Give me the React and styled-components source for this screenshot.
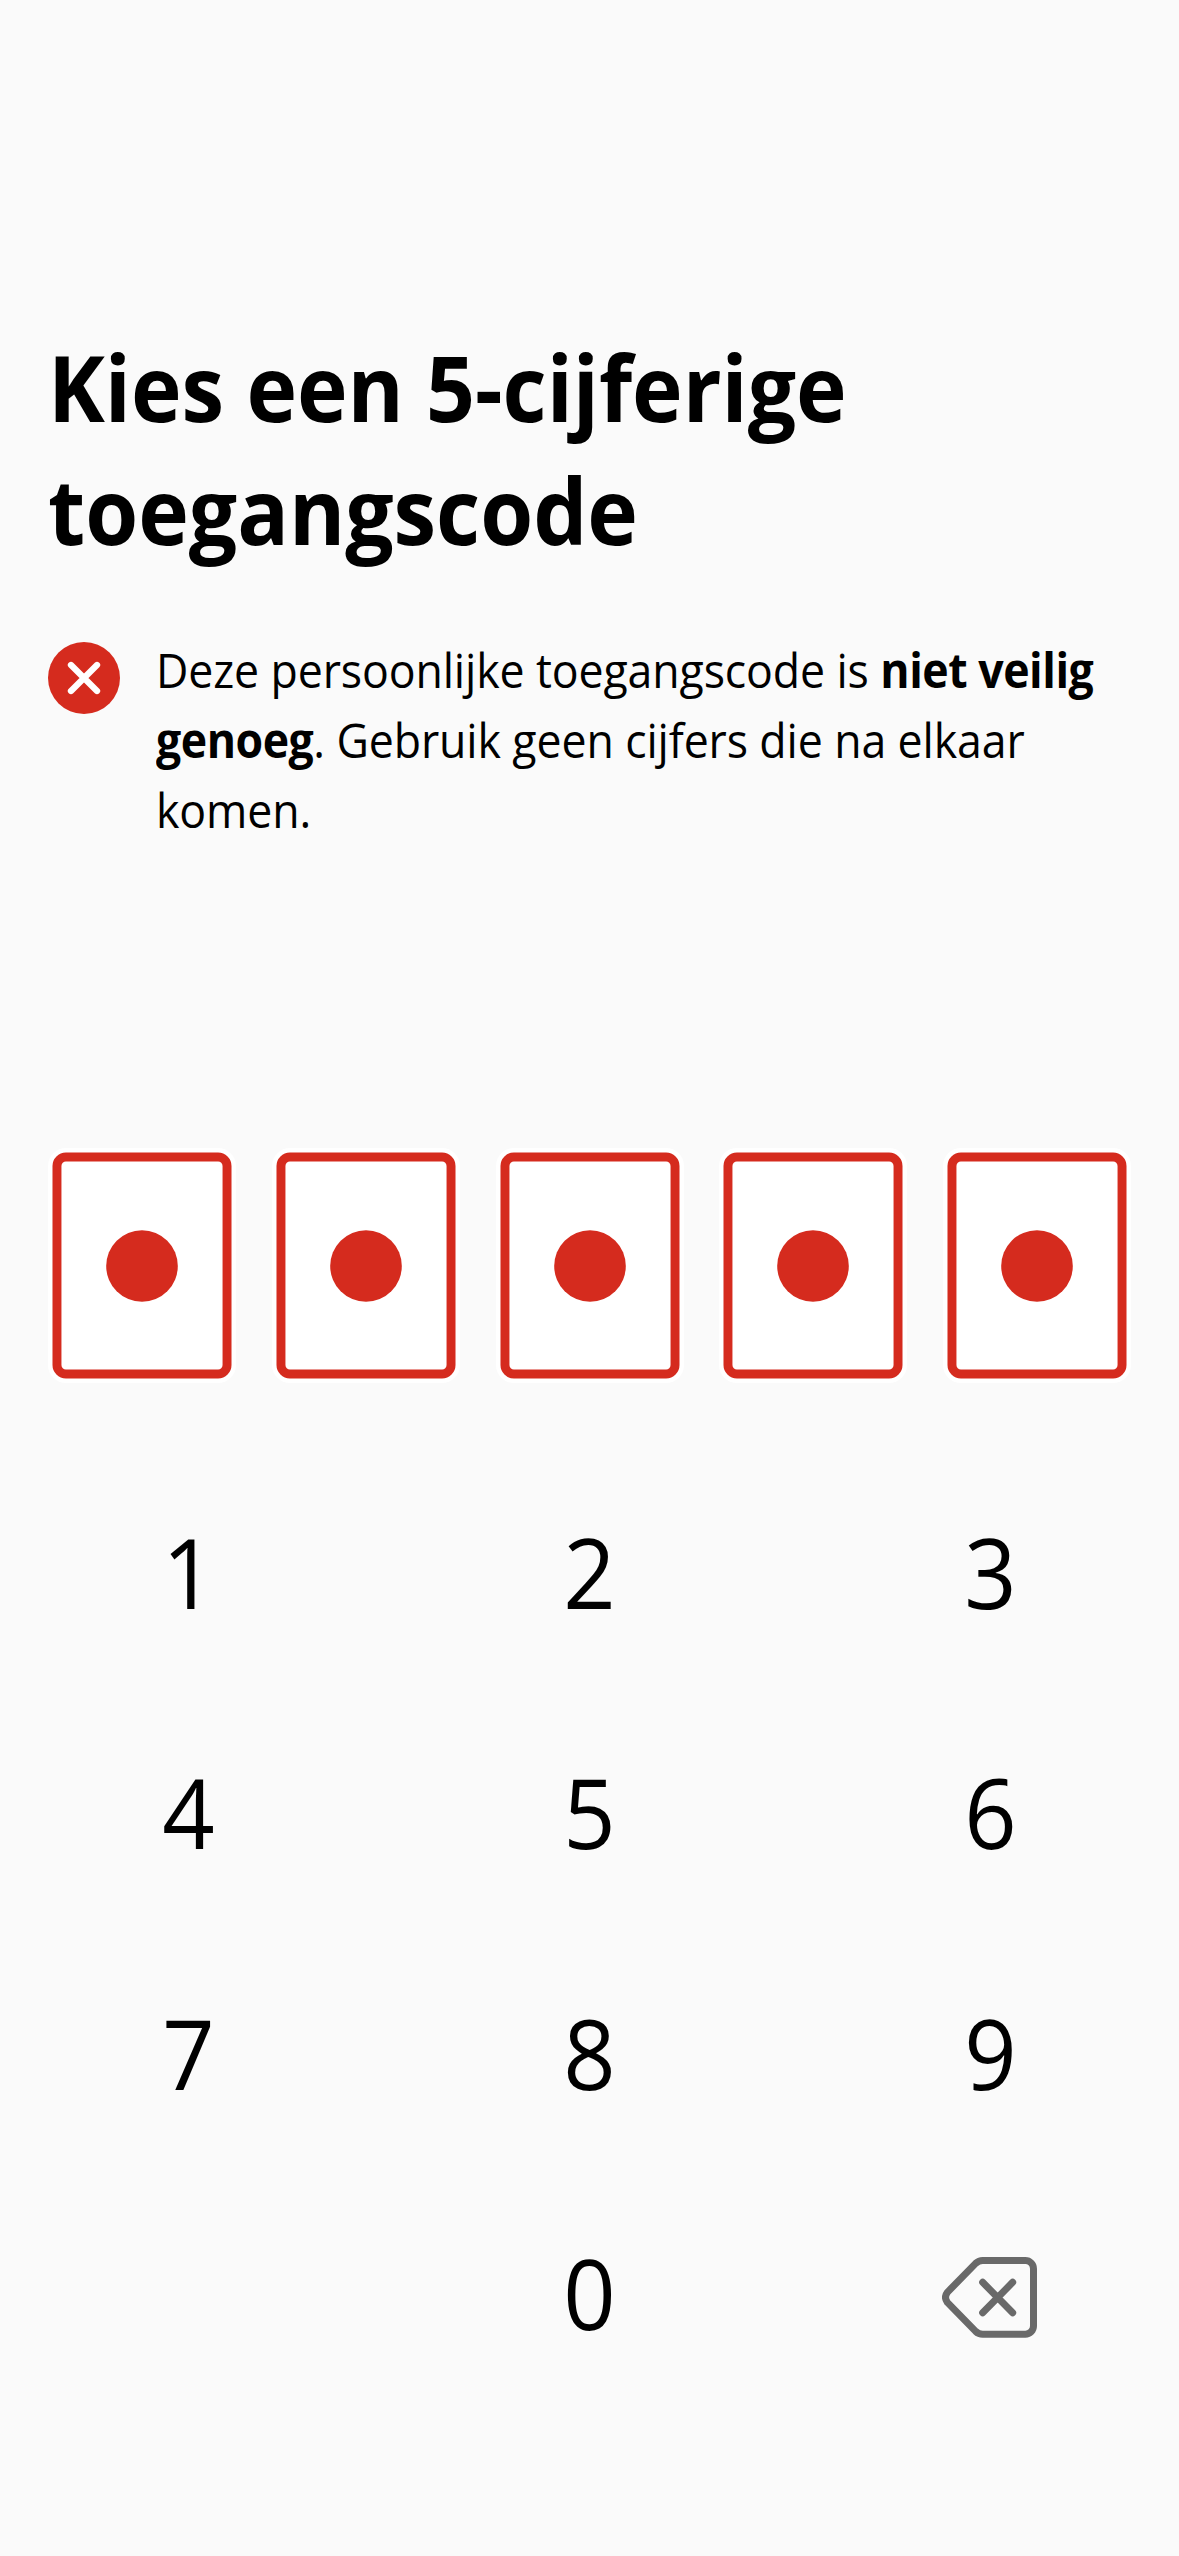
import React from "react";
import styled, { createGlobalStyle } from "styled-components";

const RED = "#d52b1e";

const GlobalStyle = createGlobalStyle`
  *, *::before, *::after { box-sizing: border-box; }
  body {
    margin: 0;
    background: #fafafa;
    color: #000;
    font-family: "Open Sans", "Noto Sans", sans-serif;
  }
`;

const Screen = styled.main`
  display: flex;
  flex-direction: column;
  width: 1179px;
  height: 2556px;
  padding-top: 326px;
  overflow: hidden;
  background: #fafafa;
`;

const Title = styled.h1`
  width: 1110px;
  height: 246px;
  margin: 0 0 0 48px;
  font-size: 91px;
  font-weight: 700;
  line-height: 123px;
  transform: scaleX(0.941);
  transform-origin: left;
`;

const Message = styled.section`
  display: flex;
  gap: 36px;
  height: 210px;
  margin: 63px 0 0 48px;
`;

const ErrorIcon = styled.svg`
  flex: none;
  width: 72px;
  height: 72px;
  margin-top: 7px;
`;

const MessageText = styled.p`
  flex: none;
  width: 1060px;
  margin: 0;
  font-size: 48px;
  line-height: 70px;
  letter-spacing: -0.12px;
  white-space: nowrap;
  transform: scaleX(0.93);
  transform-origin: left;

  strong {
    font-weight: 700;
    letter-spacing: -0.5px;
  }
`;

const CodeFields = styled.div`
  display: flex;
  justify-content: space-between;
  margin: 303px 48px 0;
`;

const CodeField = styled.div`
  width: 188px;
  height: 235px;
  padding: 4px;
  border-radius: 18px;
  background: #fff;
`;

const FieldFrame = styled.div`
  display: grid;
  place-items: center;
  height: 100%;
  border: 9px solid ${RED};
  border-radius: 13.5px;
  transform: scale(0.9945, 0.9956);
`;

const Dot = styled.span`
  width: 72px;
  height: 72px;
  border-radius: 50%;
  background: ${RED};
`;

const Keypad = styled.div`
  display: grid;
  grid-template-columns: repeat(3, 377px);
  grid-auto-rows: 216.5px;
  gap: 24px;
  margin-top: 83px;
`;

const Key = styled.button`
  display: flex;
  align-items: center;
  justify-content: center;
  padding: 0 0 ${(p) => (p.$icon ? 0 : 5)}px;
  border: 0;
  background: none;
  color: inherit;
  font: 400 96.5px/1.2 "Open Sans", "Noto Sans", sans-serif;
  transform: ${(p) => (p.$icon ? "none" : "scaleX(0.95)")};
`;

const Spacer = styled.span``;

const BackspaceIcon = styled.svg`
  width: 95px;
  height: 81px;
  margin: 3px 2px 0 0;
`;

const keys = ["1", "2", "3", "4", "5", "6", "7", "8", "9"];

export default function App() {
  return (
    <>
      <GlobalStyle />
      <Screen>
        <Title>
          Kies een 5-cijferige
          <br />
          toegangscode
        </Title>
        <Message>
          <ErrorIcon viewBox="0 0 216 216">
            <circle cx="108" cy="108" r="108" fill={RED} />
            <path
              d="M69 69L147 147M147 69L69 147"
              stroke="#fff"
              strokeWidth="19"
              strokeLinecap="round"
            />
          </ErrorIcon>
          <MessageText>
            Deze persoonlijke toegangscode is <strong>niet veilig</strong>
            <br />
            <strong>genoeg</strong>. Gebruik geen cijfers die na elkaar
            <br />
            komen.
          </MessageText>
        </Message>
        <CodeFields>
          {[0, 1, 2, 3, 4].map((i) => (
            <CodeField key={i}>
              <FieldFrame>
                <Dot />
              </FieldFrame>
            </CodeField>
          ))}
        </CodeFields>
        <Keypad>
          {keys.map((k) => (
            <Key key={k}>{k}</Key>
          ))}
          <Spacer />
          <Key>0</Key>
          <Key $icon aria-label="Wissen">
            <BackspaceIcon
              viewBox="126 111 285 243"
              fill="none"
              stroke="#696969"
              strokeWidth="21"
              strokeLinecap="round"
              strokeLinejoin="round"
            >
              <path d="M248 121.5H376A24.5 24.5 0 0 1 400.5 146V318A24.5 24.5 0 0 1 376 342.5H248Q236 342.5 227 334L142 247Q131 232 142 217L227 130Q236 121.5 248 121.5Z" />
              <path d="M248 187L338 278M338 187L248 278" />
            </BackspaceIcon>
          </Key>
        </Keypad>
      </Screen>
    </>
  );
}
